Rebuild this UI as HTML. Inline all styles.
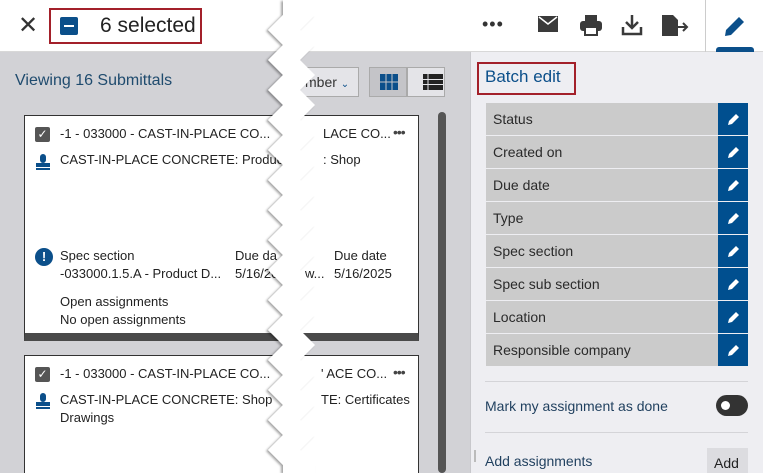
<!DOCTYPE html>
<html style="width:763px;height:473px;overflow:hidden"><head><style>
*{margin:0;padding:0;box-sizing:border-box}
body{width:763px;height:473px;overflow:hidden;font-family:"Liberation Sans",sans-serif;background:#d2d2d6;position:relative;color:#222}
.abs{position:absolute}
.hdr{left:0;top:0;width:763px;height:52px;background:#fff;border-bottom:1px solid #d8d8d8}
.rp{left:470px;top:52px;width:293px;height:421px;background:#eeeef2;border-left:1px solid #c8c8cc}
.row{position:absolute;left:486px;width:262px;height:32px;background:#cbcbcb;font-size:14px;color:#2a2a2a;line-height:32px;padding-left:7px}
.row .b{position:absolute;right:0;top:0;width:30px;height:32px;background:#004f8f}
.card{position:absolute;left:24px;width:395px;background:#fff;border:1px solid #333;font-size:13px;color:#222}
.t{position:absolute;white-space:nowrap}
.dots{position:absolute;left:368px;font-size:14px;color:#444;letter-spacing:-1px}
</style></head><body>
<div class="abs hdr"></div>
<div class="abs" style="left:18px;top:14px;font-size:24px;color:#333;line-height:24px">✕</div>
<div class="abs" style="left:49px;top:8px;width:153px;height:36px;border:2px solid #a3202a"></div>
<div class="abs" style="left:60px;top:17px;width:18px;height:18px;background:#0b4f8a;border-radius:2px"><div style="position:absolute;left:4px;top:8px;width:10px;height:2px;background:#fff"></div></div>
<div class="abs" style="left:100px;top:14px;font-size:21px;color:#222">6 selected</div>
<div class="abs" style="left:482px;top:14px;font-size:18px;color:#333;letter-spacing:1px">•••</div>
<svg class="abs" style="left:537px;top:15px" width="22" height="18" viewBox="0 0 22 18"><rect x="1" y="1" width="20" height="16" fill="#3a3a3a"/><path d="M2 2 L11 9 L20 2" stroke="#fff" stroke-width="1.5" fill="none"/></svg>
<svg class="abs" style="left:579px;top:14px" width="24" height="22" viewBox="0 0 24 22"><rect x="6" y="1" width="12" height="6" fill="#3a3a3a"/><rect x="1" y="7" width="22" height="10" rx="3" fill="#3a3a3a"/><rect x="6" y="13" width="12" height="8" fill="#fff" stroke="#3a3a3a" stroke-width="2"/></svg>
<svg class="abs" style="left:621px;top:14px" width="22" height="22" viewBox="0 0 22 22"><path d="M11 1V14M5 8l6 6 6-6M2 13v7h18v-7" stroke="#3a3a3a" stroke-width="2.5" fill="none"/></svg>
<svg class="abs" style="left:661px;top:14px" width="28" height="24" viewBox="0 0 28 24"><path d="M1 1h11l5 5v16H1z" fill="#3a3a3a"/><path d="M14 13h12M22 9l4 4-4 4" stroke="#3a3a3a" stroke-width="2" fill="none"/></svg>
<div class="abs" style="left:705px;top:0;width:1px;height:52px;background:#ccc"></div>
<svg class="abs" style="left:722px;top:13px" width="26" height="26" viewBox="0 0 26 26"><path d="M3 23l1-6L17 4l5 5L9 22z" fill="#0b4f8a"/></svg>
<div class="abs" style="left:716px;top:47px;width:38px;height:5px;background:#0b4f8a;border-radius:3px 3px 0 0"></div>

<div class="abs" style="left:15px;top:72px;font-size:16px;color:#1f4b6e">Viewing 16 Submittals</div>
<div class="abs" style="left:292px;top:67px;width:67px;height:30px;background:#e4e4e8;border:1px solid #aaa;font-size:14px;line-height:28px;color:#333;padding-left:12px">mber <span style="color:#0b4f8a;font-size:10px">⌄</span></div>
<div class="abs" style="left:369px;top:67px;width:38px;height:30px;background:#c4c4c8;border:1px solid #aaa"></div>
<div class="abs" style="left:407px;top:67px;width:38px;height:30px;background:#e4e4e8;border:1px solid #aaa"></div>
<svg class="abs" style="left:380px;top:74px" width="18" height="16"><rect width="18" height="16" fill="#0b4f8a"/><path d="M6 0v16M12 0v16M0 8h18" stroke="#c4c4c8" stroke-width="1"/></svg>
<svg class="abs" style="left:423px;top:74px" width="20" height="16"><rect width="20" height="16" fill="#222"/><path d="M0 5.5h20M0 10.5h20M5 0v16" stroke="#e4e4e8" stroke-width="1"/></svg>
<div class="abs" style="left:438px;top:112px;width:8px;height:361px;background:#555;border-radius:4px"></div>

<div class="card" style="top:115px;height:226px;border-bottom:8px solid #4a4a4a">
<div class="t" style="left:10px;top:11px;width:15px;height:15px;background:#555;border-radius:2px;color:#fff;font-size:12px;line-height:15px;text-align:center">✓</div>
<div class="t" style="left:35px;top:10px">-1 - 033000 - CAST-IN-PLACE CO...</div>
<div class="t" style="left:298px;top:10px">LACE CO...</div>
<div class="dots" style="top:8px">•••</div>
<svg class="t" style="left:10px;top:38px" width="16" height="17"><rect x="5" y="0" width="6" height="9" rx="3" fill="#0b4f8a"/><rect x="1" y="9" width="14" height="4" fill="#0b4f8a"/><rect x="1" y="14" width="14" height="2" fill="#0b4f8a"/></svg>
<div class="t" style="left:35px;top:36px">CAST-IN-PLACE CONCRETE: Produc</div>
<div class="t" style="left:298px;top:36px">: Shop</div>
<div class="t" style="left:10px;top:132px;width:18px;height:18px;border-radius:50%;background:#0b4f8a;color:#fff;font-weight:bold;font-size:13px;text-align:center;line-height:18px">!</div>
<div class="t" style="left:35px;top:132px">Spec section</div>
<div class="t" style="left:35px;top:150px">-033000.1.5.A - Product D...</div>
<div class="t" style="left:210px;top:132px">Due da</div>
<div class="t" style="left:210px;top:150px">5/16/20</div>
<div class="t" style="left:280px;top:150px">w...</div>
<div class="t" style="left:309px;top:132px">Due date</div>
<div class="t" style="left:309px;top:150px">5/16/2025</div>
<div class="t" style="left:35px;top:178px">Open assignments</div>
<div class="t" style="left:35px;top:196px">No open assignments</div>
</div>
<div class="card" style="top:355px;height:130px">
<div class="t" style="left:10px;top:11px;width:15px;height:15px;background:#555;border-radius:2px;color:#fff;font-size:12px;line-height:15px;text-align:center">✓</div>
<div class="t" style="left:35px;top:10px">-1 - 033000 - CAST-IN-PLACE CO...</div>
<div class="t" style="left:296px;top:10px">' ACE CO...</div>
<div class="dots" style="top:8px">•••</div>
<svg class="t" style="left:10px;top:37px" width="16" height="17"><rect x="5" y="0" width="6" height="9" rx="3" fill="#0b4f8a"/><rect x="1" y="9" width="14" height="4" fill="#0b4f8a"/><rect x="1" y="14" width="14" height="2" fill="#0b4f8a"/></svg>
<div class="t" style="left:35px;top:36px">CAST-IN-PLACE CONCRETE: Shop</div>
<div class="t" style="left:35px;top:54px">Drawings</div>
<div class="t" style="left:296px;top:36px">TE: Certificates</div>
</div>

<svg class="abs" style="left:255px;top:0" width="75" height="473">
<defs><filter id="s"><feDropShadow dx="-2" dy="1" stdDeviation="1" flood-color="#000" flood-opacity="0.35"/></filter></defs>
<polygon filter="url(#s)" fill="#fff" points="12,0 28,0 28,15 13,30 28,45 13,60 28,75 13,90 28,105 13,120 28,135 13,150 28,165 13,180 28,195 13,210 28,225 13,240 28,255 13,270 28,285 13,300 28,315 13,330 28,345 13,360 28,375 13,390 28,405 13,420 28,435 13,450 28,465 28,473 60,473 60,465 45,450 60,435 45,420 60,405 45,390 60,375 45,360 60,345 45,330 60,315 45,300 60,285 45,270 60,255 45,240 60,225 45,210 60,195 45,180 60,165 45,150 60,135 45,120 60,105 45,90 60,75 45,60 60,45 45,30 60,15 45,0"/>
</svg>

<div class="abs rp"></div>
<div class="abs" style="left:477px;top:62px;width:99px;height:33px;border:2px solid #a3202a"></div>
<div class="abs" style="left:485px;top:67px;font-size:17px;color:#0b4f8a">Batch edit</div>
<div class="row" style="top:103px">Status<div class="b"></div></div>
<div class="row" style="top:136px">Created on<div class="b"></div></div>
<div class="row" style="top:169px">Due date<div class="b"></div></div>
<div class="row" style="top:202px">Type<div class="b"></div></div>
<div class="row" style="top:235px">Spec section<div class="b"></div></div>
<div class="row" style="top:268px">Spec sub section<div class="b"></div></div>
<div class="row" style="top:301px">Location<div class="b"></div></div>
<div class="row" style="top:334px">Responsible company<div class="b"></div></div>
<svg class="abs" style="left:726px;top:111px" width="16" height="250">
<g fill="#fff"><path d="M2 14l1-4 7-7 3 3-7 7z" id="p"/><use href="#p" y="33"/><use href="#p" y="66"/><use href="#p" y="99"/><use href="#p" y="132"/><use href="#p" y="165"/><use href="#p" y="198"/><use href="#p" y="231"/></g></svg>
<div class="abs" style="left:485px;top:381px;width:263px;height:1px;background:#d4d4d8"></div>
<div class="abs" style="left:485px;top:398px;font-size:14px;color:#1f3f5e">Mark my assignment as done</div>
<div class="abs" style="left:716px;top:395px;width:32px;height:21px;border-radius:11px;background:#333"><div style="position:absolute;left:5px;top:6px;width:9px;height:9px;border-radius:50%;background:#fff"></div></div>
<div class="abs" style="left:485px;top:432px;width:263px;height:1px;background:#d4d4d8"></div>
<div class="abs" style="left:474px;top:450px;width:2px;height:12px;background:#bbb"></div>
<div class="abs" style="left:485px;top:453px;font-size:14px;color:#1f3f5e">Add assignments</div>
<div class="abs" style="left:707px;top:448px;width:41px;height:25px;background:#dcdce0;font-size:14px;padding:7px 0 0 7px;color:#222">Add</div>
</body></html>
